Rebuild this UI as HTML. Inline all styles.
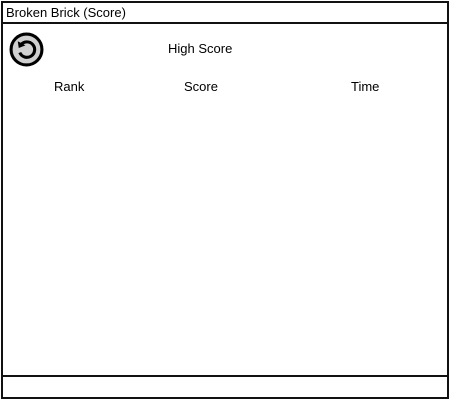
<!DOCTYPE html>
<html><head><style>
body{margin:0;width:450px;height:400px;background:#fff;font-family:"Liberation Sans",sans-serif;font-size:13px;color:#000;position:relative;overflow:hidden}
.b{position:absolute;box-sizing:border-box}
.t{position:absolute;white-space:nowrap;line-height:1}
</style></head><body>
<div class="b" style="left:1px;top:1px;width:448px;height:398px;border:2px solid #111"></div>
<div class="b" style="left:1px;top:22px;width:448px;height:2px;background:#111"></div>
<div class="b" style="left:1px;top:375px;width:448px;height:2px;background:#111"></div>
<div class="t" style="left:6px;top:6px">Broken Brick (Score)</div>
<svg style="position:absolute;left:9px;top:32px" width="35" height="35" viewBox="0 0 34 34">
<circle cx="17" cy="17" r="15" fill="#d0d0d0" stroke="#000" stroke-width="3"/>
<path d="M11.5 12.5 A7.5 7.5 0 1 1 10.5 20" fill="none" stroke="#000" stroke-width="3"/>
<path d="M8.5 9 L9.5 15.5 L16 13 Z" fill="#000"/>
</svg>
<div class="t" style="left:168px;top:42px">High Score</div>
<div class="t" style="left:54px;top:80px">Rank</div>
<div class="t" style="left:184px;top:80px">Score</div>
<div class="t" style="left:351px;top:80px">Time</div>
</body></html>
